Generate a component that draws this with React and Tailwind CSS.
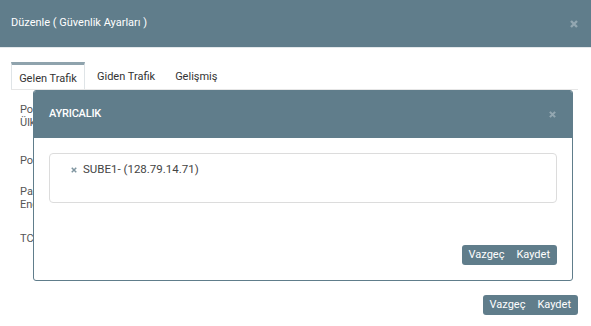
import React from "react";

function CloseX({ className = "", size = 8, stroke = 2.4 }) {
  return (
    <svg width={size} height={size} viewBox="0 0 8 8" className={className}>
      <path d="M1 1L7 7M7 1L1 7" stroke="currentColor" strokeWidth={stroke} strokeLinecap="butt" />
    </svg>
  );
}

function BtnGroup() {
  return (
    <div className="flex h-[20px] rounded-[3px] bg-[#607d8b] text-white text-[11px] leading-[20px] overflow-hidden">
      <span className="pl-[7px] pr-[6px]">Vazgeç</span>
      <span className="pl-[6px] pr-[7px]">Kaydet</span>
    </div>
  );
}

export default function App() {
  return (
    <div className="relative w-[591px] h-[326px] overflow-hidden bg-white text-[#444] font-['Roboto',sans-serif]">
      {/* outer header */}
      <div className="h-[47px] bg-[#607d8b] flex items-center justify-between pl-[11px] pr-[13px] text-white">
        <span className="text-[11px]">Düzenle ( Güvenlik Ayarları )</span>
        <CloseX className="text-[#93a7b1]" size={8} />
      </div>
      <div className="h-px bg-[#e3e8eb]" />

      {/* tabs */}
      <div className="mt-[15px] mx-[11px] mr-[13px] flex items-end border-b border-[#e6e6e6] h-[27px] text-[11px]">
        <div className="w-[74px] h-[27px] border-t-[3px] border-t-[#8fa3ad] border-x border-x-[#dfe4e7] flex justify-center pt-[6px] text-[#333] bg-white">
          Gelen Trafik
        </div>
        <div className="ml-[12px] self-start pt-[6px] text-[#333]">Giden Trafik</div>
        <div className="ml-[20px] self-start pt-[6px] text-[#333]">Gelişmiş</div>
      </div>

      {/* tab content (mostly covered by the dialog) */}
      <div className="w-[33px] overflow-hidden pl-[20px] text-[11px] text-[#555] leading-[13px] whitespace-nowrap">
        <div className="mt-[13px]">
          <div>Port Tarama</div>
          <div>Ülke Engelleme</div>
        </div>
        <div className="mt-[25px]">Port</div>
        <div className="mt-[18px]">
          <div>Paket</div>
          <div>Engelleme</div>
        </div>
        <div className="mt-[21px]">TCP</div>
      </div>

      {/* outer footer */}
      <div className="absolute right-[13px] top-[295px]">
        <BtnGroup />
      </div>

      {/* inner modal */}
      <div className="absolute left-[33px] top-[90px] w-[540px] h-[191px] border border-[#607d8b] rounded-[3px] bg-white flex flex-col overflow-hidden">
        <div className="h-[47px] shrink-0 bg-[#607d8b] flex items-center justify-between pl-[15px] pr-[16px] text-white">
          <span className="text-[11px] font-medium tracking-[-0.2px]">AYRICALIK</span>
          <CloseX className="text-[#93a7b1]" size={7} />
        </div>
        <div className="flex-1 px-[15px] pt-[15px] pb-[15px] flex flex-col">
          <div className="h-[50px] border border-[#dcdcdc] rounded-[4px] pl-[21px] pt-[7px]">
            <div className="flex items-center gap-[6px] text-[11.5px] text-[#444]">
              <CloseX className="text-[#7f95a0]" size={6} stroke={2} />
              <span>SUBE1- (128.79.14.71)</span>
            </div>
          </div>
          <div className="mt-auto flex justify-end">
            <BtnGroup />
          </div>
        </div>
      </div>
    </div>
  );
}
